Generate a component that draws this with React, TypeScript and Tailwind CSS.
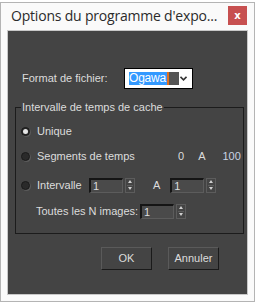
import { useState } from 'react'

const dlg = "font-['Liberation_Sans',Tahoma,sans-serif] text-[11px] text-[#dcdcdc]"

function Radio({ checked, label, onClick }: { checked: boolean; label: string; onClick: () => void }) {
  return (
    <button onClick={onClick} className="flex items-center gap-[7px]">
      <span className="w-[9px] h-[9px] rounded-full bg-[#2a2a2a] border border-[#1a1a1a] shadow-[1px_1px_0_#5a5a5a] flex items-center justify-center">
        {checked && <span className="w-[5px] h-[5px] rounded-full bg-[#e6e6e6]" />}
      </span>
      <span>{label}</span>
    </button>
  )
}

function Spinner({ value }: { value: string }) {
  return (
    <div className="flex items-center gap-[2px]">
      <div className="w-[34px] h-[15px] bg-[#4a4a4a] border-t-2 border-l-2 border-t-[#151515] border-l-[#151515] border-b border-r border-b-[#5c5c5c] border-r-[#5c5c5c] pl-[2px] leading-[12px]">
        {value}
      </div>
      <div className="w-[10px] h-[15px] border border-[#5c5c5c] flex flex-col">
        <div className="flex-1 flex items-center justify-center">
          <span className="w-0 h-0 border-x-[2.5px] border-x-transparent border-b-[3px] border-b-[#d0d0d0]" />
        </div>
        <div className="h-px mx-[1px] bg-[#5c5c5c]" />
        <div className="flex-1 flex items-center justify-center">
          <span className="w-0 h-0 border-x-[2.5px] border-x-transparent border-t-[3px] border-t-[#d0d0d0]" />
        </div>
      </div>
    </div>
  )
}

export default function App() {
  const [mode, setMode] = useState('unique')

  return (
    <div className="w-[255px] h-[302px] bg-white pt-[2px]">
      <div className="h-[300px] border border-[#b4b4b4] bg-[#fafafa] flex flex-col">
        <div className="h-[27px] flex items-start justify-between pl-[10px] pr-[7px]">
          <span className="font-['Open_Sans','Noto_Sans',sans-serif] text-[14px] leading-[20px] text-[#2b2b2b] mt-[3px] tracking-[-0.2px] whitespace-nowrap overflow-hidden">
            Options du programme d'expo...
          </span>
          <button className="shrink-0 w-[19px] h-[19px] mt-[3px] bg-[#c75050] text-white text-[10px] font-bold font-['DejaVu_Sans',sans-serif] flex items-center justify-center leading-none">
            x
          </button>
        </div>
        <div className={`mx-[6px] h-[265px] bg-[#444444] border border-[#c8c8c8] flex flex-col ${dlg}`}>
          <div className="mt-[37px] h-[21px] flex items-center pl-[14px]">
            <span className="w-[102px]">Format de fichier:</span>
            <div className="w-[69px] h-[21px] border border-black bg-white flex items-center pl-[4px] pr-[3px]">
              <span className="h-[13px] bg-[#3399ff] text-white leading-[13px] pr-[1px] text-[12px] tracking-[-0.2px]">Ogawa</span>
              <span className="w-[2px] h-[13px] bg-[#e07020]" />
              <span className="w-[10px] h-[13px] bg-[#555555]" />
              <svg className="ml-auto mr-[2px]" width="7" height="5" viewBox="0 0 7 5">
                <path d="M0.5 0.8 L3.5 3.8 L6.5 0.8" stroke="#333" strokeWidth="1.6" fill="none" />
              </svg>
            </div>
          </div>

          <div className="relative mt-[18px] ml-[7px] mr-[3px] h-[127px] border border-[#1c1c1c] flex flex-col">
            <span className="absolute -top-[8px] left-[5px] px-[1px] bg-[#444444] leading-[14px]">
              Intervalle de temps de cache
            </span>
            <div className="mt-[15px] h-[16px] flex items-center pl-[5px]">
              <Radio checked={mode === 'unique'} label="Unique" onClick={() => setMode('unique')} />
            </div>
            <div className="mt-[9px] h-[16px] flex items-center pl-[5px]">
              <div className="w-[157px] flex">
                <Radio checked={mode === 'seg'} label="Segments de temps" onClick={() => setMode('seg')} />
              </div>
              <span>0</span>
              <span className="ml-[14px]">A</span>
              <span className="ml-[17px] text-[#c9d3e3]">100</span>
            </div>
            <div className="mt-[13px] h-[16px] flex items-center pl-[5px]">
              <div className="w-[68px] flex">
                <Radio checked={mode === 'int'} label="Intervalle" onClick={() => setMode('int')} />
              </div>
              <Spinner value="1" />
              <span className="ml-[18px]">A</span>
              <span className="ml-[10px]">
                <Spinner value="1" />
              </span>
            </div>
            <div className="mt-[10px] h-[16px] flex items-center pl-[20px]">
              <span className="w-[104px]">Toutes les N images:</span>
              <Spinner value="1" />
            </div>
          </div>

          <div className="mt-[13px] flex justify-end gap-[16px] pr-[28px]">
            <button className="w-[51px] h-[23px] border border-t-[#5a5a5a] border-l-[#5a5a5a] border-b-[#1a1a1a] border-r-[#1a1a1a] bg-[#444444]">
              OK
            </button>
            <button className="w-[51px] h-[23px] border border-t-[#5a5a5a] border-l-[#5a5a5a] border-b-[#1a1a1a] border-r-[#1a1a1a] bg-[#444444]">
              Annuler
            </button>
          </div>
        </div>
      </div>
    </div>
  )
}
